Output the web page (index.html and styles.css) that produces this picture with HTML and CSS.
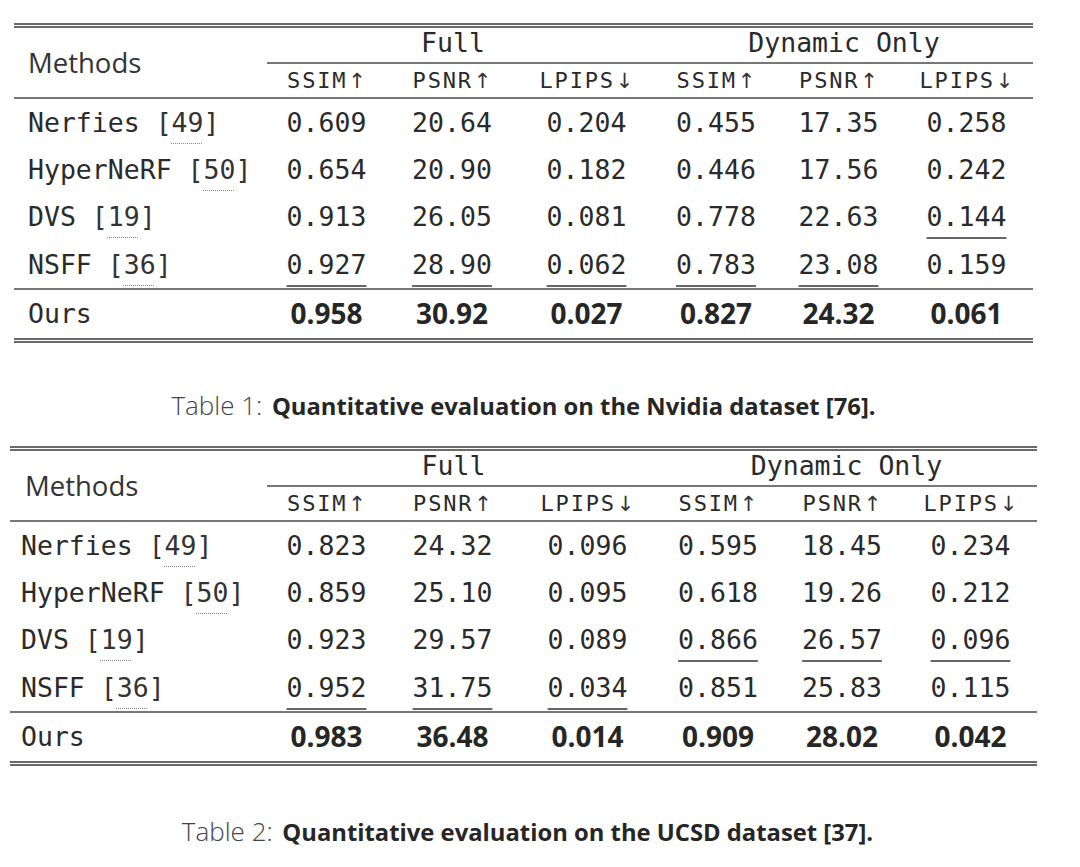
FILE: index.html
```html
<!DOCTYPE html>
<html lang="en">
<head>
<meta charset="utf-8">
<title>Quantitative evaluation</title>
<link rel="stylesheet" href="styles.css">
</head>
<body>
<main class="page">
  <section class="figure fig-1">
    <table class="results">
      <colgroup>
        <col class="c-method"><col class="c-ssim"><col class="c-psnr"><col class="c-lpips"><col class="c-ssim2"><col class="c-psnr2"><col class="c-lpips2">
      </colgroup>
      <thead>
        <tr class="group-row">
          <th class="methods" rowspan="2">Methods</th>
          <th class="group full" colspan="3">Full</th>
          <th class="group" colspan="3">Dynamic Only</th>
        </tr>
        <tr class="metric-row">
          <th>SSIM<span class="arr">↑</span></th>
          <th>PSNR<span class="arr">↑</span></th>
          <th>LPIPS<span class="arr">↓</span></th>
          <th>SSIM<span class="arr">↑</span></th>
          <th>PSNR<span class="arr">↑</span></th>
          <th>LPIPS<span class="arr">↓</span></th>
        </tr>
      </thead>
      <tbody>
        <tr class="r1">
          <td class="name">Nerfies <span class="cite">[<span class="ref">49</span>]</span></td>
          <td>0.609</td><td>20.64</td><td>0.204</td><td>0.455</td><td>17.35</td><td>0.258</td>
        </tr>
        <tr class="r2">
          <td class="name">HyperNeRF <span class="cite">[<span class="ref">50</span>]</span></td>
          <td>0.654</td><td>20.90</td><td>0.182</td><td>0.446</td><td>17.56</td><td>0.242</td>
        </tr>
        <tr class="r3">
          <td class="name">DVS <span class="cite">[<span class="ref">19</span>]</span></td>
          <td>0.913</td><td>26.05</td><td>0.081</td><td>0.778</td><td>22.63</td><td><span class="second">0.144</span></td>
        </tr>
        <tr class="r4">
          <td class="name">NSFF <span class="cite">[<span class="ref">36</span>]</span></td>
          <td><span class="second">0.927</span></td><td><span class="second">28.90</span></td><td><span class="second">0.062</span></td><td><span class="second">0.783</span></td><td><span class="second">23.08</span></td><td>0.159</td>
        </tr>
        <tr class="ours">
          <td class="name">Ours</td>
          <td class="best">0.958</td><td class="best">30.92</td><td class="best">0.027</td><td class="best">0.827</td><td class="best">24.32</td><td class="best">0.061</td>
        </tr>
      </tbody>
    </table>
    <p class="caption"><span class="label">Table 1:</span> <span class="title">Quantitative evaluation on the Nvidia dataset [76].</span></p>
  </section>

  <section class="figure fig-2">
    <table class="results">
      <colgroup>
        <col class="c-method"><col class="c-ssim"><col class="c-psnr"><col class="c-lpips"><col class="c-ssim2"><col class="c-psnr2"><col class="c-lpips2">
      </colgroup>
      <thead>
        <tr class="group-row">
          <th class="methods" rowspan="2">Methods</th>
          <th class="group full" colspan="3">Full</th>
          <th class="group" colspan="3">Dynamic Only</th>
        </tr>
        <tr class="metric-row">
          <th>SSIM<span class="arr">↑</span></th>
          <th>PSNR<span class="arr">↑</span></th>
          <th>LPIPS<span class="arr">↓</span></th>
          <th>SSIM<span class="arr">↑</span></th>
          <th>PSNR<span class="arr">↑</span></th>
          <th>LPIPS<span class="arr">↓</span></th>
        </tr>
      </thead>
      <tbody>
        <tr class="r1">
          <td class="name">Nerfies <span class="cite">[<span class="ref">49</span>]</span></td>
          <td>0.823</td><td>24.32</td><td>0.096</td><td>0.595</td><td>18.45</td><td>0.234</td>
        </tr>
        <tr class="r2">
          <td class="name">HyperNeRF <span class="cite">[<span class="ref">50</span>]</span></td>
          <td>0.859</td><td>25.10</td><td>0.095</td><td>0.618</td><td>19.26</td><td>0.212</td>
        </tr>
        <tr class="r3">
          <td class="name">DVS <span class="cite">[<span class="ref">19</span>]</span></td>
          <td>0.923</td><td>29.57</td><td>0.089</td><td><span class="second">0.866</span></td><td><span class="second">26.57</span></td><td><span class="second">0.096</span></td>
        </tr>
        <tr class="r4">
          <td class="name">NSFF <span class="cite">[<span class="ref">36</span>]</span></td>
          <td><span class="second">0.952</span></td><td><span class="second">31.75</span></td><td><span class="second">0.034</span></td><td>0.851</td><td>25.83</td><td>0.115</td>
        </tr>
        <tr class="ours">
          <td class="name">Ours</td>
          <td class="best">0.983</td><td class="best">36.48</td><td class="best">0.014</td><td class="best">0.909</td><td class="best">28.02</td><td class="best">0.042</td>
        </tr>
      </tbody>
    </table>
    <p class="caption"><span class="label">Table 2:</span> <span class="title">Quantitative evaluation on the UCSD dataset [<span class="ref">37</span>].</span></p>
  </section>
</main>
</body>
</html>
```

FILE: styles.css
```css
html, body {
  margin: 0;
  padding: 0;
  background: #ffffff;
}

body {
  color: #2a2a2a;
  font-family: "DejaVu Sans Mono", "Liberation Mono", monospace;
}

.page {
  display: flex;
  flex-direction: column;
  padding-top: 23px;
}

.figure {
  display: flex;
  flex-direction: column;
}

.fig-1 {
  padding-left: 14px;
}

.fig-2 {
  padding-left: 10px;
}

.results {
  border-collapse: separate;
  border-spacing: 0;
  table-layout: fixed;
  border-top: 5px double #6a6a6a;
  border-bottom: 5px double #6a6a6a;
  font-family: "DejaVu Sans Mono", "Liberation Mono", monospace;
  font-size: 26.5px;
  color: #2a2a2a;
}

.fig-1 .results { width: 1019px; }
.fig-2 .results { width: 1027px; }

.fig-1 .c-method { width: 253px; }
.fig-1 .c-ssim { width: 119px; }
.fig-1 .c-psnr { width: 132px; }
.fig-1 .c-lpips { width: 137px; }
.fig-1 .c-ssim2 { width: 122px; }
.fig-1 .c-psnr2 { width: 123px; }
.fig-1 .c-lpips2 { width: 133px; }

.fig-2 .c-method { width: 257px; }
.fig-2 .c-ssim { width: 119px; }
.fig-2 .c-psnr { width: 133px; }
.fig-2 .c-lpips { width: 137px; }
.fig-2 .c-ssim2 { width: 124px; }
.fig-2 .c-psnr2 { width: 124px; }
.fig-2 .c-lpips2 { width: 133px; }

.results th,
.results td {
  padding: 0;
  text-align: center;
  vertical-align: middle;
  font-weight: normal;
  white-space: nowrap;
  line-height: 1.2;
}

.group-row { height: 36px; }
.metric-row { height: 35px; }

.results .methods {
  text-align: left;
  padding-left: 14px;
  font-family: "Open Sans", "DejaVu Sans", sans-serif;
  font-size: 27.5px;
  line-height: 1;
  color: #333;
  border-bottom: 2px solid #777;
}

.fig-2 .results .methods { padding-left: 15px; }

.results .group {
  border-bottom: 2px solid #777;
  padding-bottom: 4px;
  font-size: 26.5px;
  line-height: 1;
}

.results .group.full {
  padding-right: 16px;
}

.metric-row th {
  font-size: 22px;
  line-height: 1;
  letter-spacing: 1.8px;
  border-bottom: 2px solid #777;
}

.arr {
  font-family: "DejaVu Sans", sans-serif;
  font-size: 21px;
  letter-spacing: 0;
  margin-left: 1px;
  color: #333;
}

tbody tr { height: 48px; }
tbody tr.r1, tbody tr.r2 { height: 47px; }
tbody tr.r4 { height: 49px; }

tbody td {
  padding-bottom: 5px;
}

.results .name {
  text-align: left;
  padding-left: 14px;
}

.fig-2 .results .name { padding-left: 11px; }

.cite {
  color: #333;
}

.ref {
  text-decoration: underline dotted #8a8a8a;
  text-decoration-thickness: 1px;
  text-underline-offset: 11px;
}

.second {
  text-decoration: underline solid #666;
  text-decoration-thickness: 2px;
  text-underline-offset: 11px;
}

tbody tr.r4 td {
  border-bottom: 2px solid #777;
}

tbody tr.ours td {
  padding-bottom: 0;
}

.results .best {
  font-family: "Open Sans", "DejaVu Sans", sans-serif;
  font-weight: bold;
  font-size: 28px;
  color: #262626;
}

.caption {
  margin: 0;
  text-align: center;
  line-height: 30px;
  width: 1019px;
  color: #2a2a2a;
}

.fig-1 .caption {
  margin-top: 47px;
  margin-bottom: 21px;
}

.fig-2 .caption {
  margin-top: 50px;
  width: 1035px;
}

.caption .label {
  font-family: "Open Sans", "Noto Sans", sans-serif;
  font-weight: 300;
  font-size: 26px;
  color: #444;
}

.caption .title {
  font-family: "Open Sans", "Noto Sans", sans-serif;
  font-weight: bold;
  font-size: 23.8px;
  color: #262626;
}
```
